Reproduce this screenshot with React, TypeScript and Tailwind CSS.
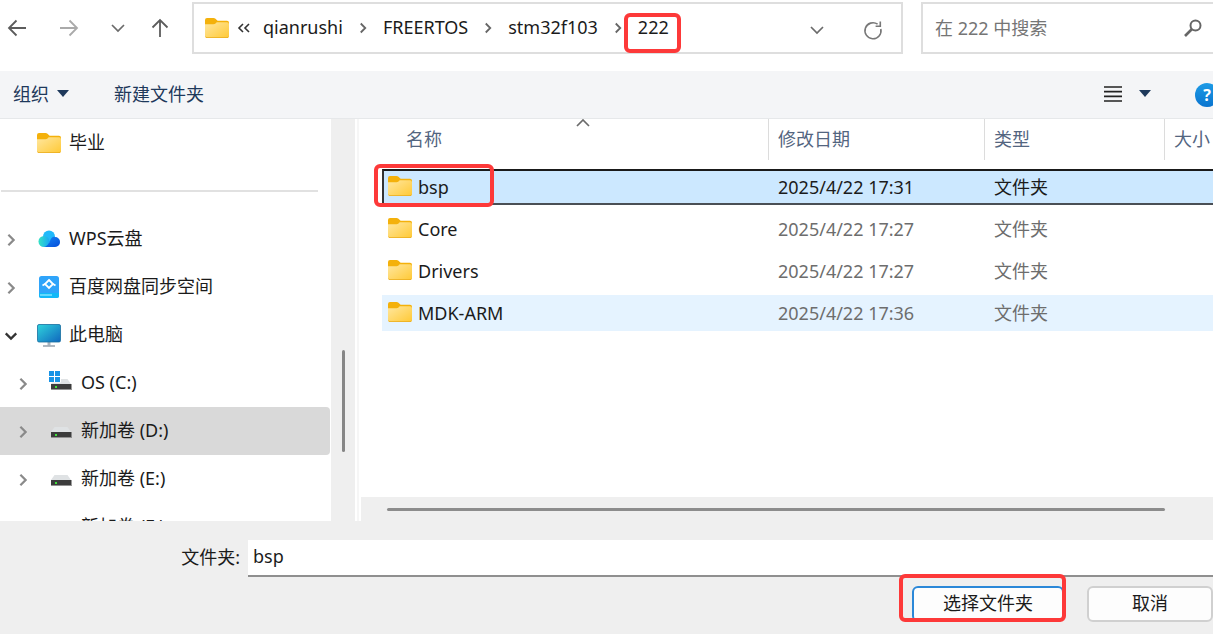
import { useState } from "react";
import type { ReactNode } from "react";
import clsx from "clsx";

type Entry = {
  name: string;
  modified: string;
  type: string;
};

type TreeNode = {
  label: string;
  icon: ReactNode;
  level: 0 | 1;
  state?: "collapsed" | "expanded";
};

const ENTRIES: Entry[] = [
  { name: "bsp", modified: "2025/4/22 17:31", type: "文件夹" },
  { name: "Core", modified: "2025/4/22 17:27", type: "文件夹" },
  { name: "Drivers", modified: "2025/4/22 17:27", type: "文件夹" },
  { name: "MDK-ARM", modified: "2025/4/22 17:36", type: "文件夹" },
];

const TREE: TreeNode[] = [
  { label: "WPS云盘", icon: <CloudIcon />, level: 0, state: "collapsed" },
  { label: "百度网盘同步空间", icon: <SyncIcon />, level: 0, state: "collapsed" },
  { label: "此电脑", icon: <ComputerIcon />, level: 0, state: "expanded" },
  { label: "OS (C:)", icon: <DriveIcon system />, level: 1, state: "collapsed" },
  { label: "新加卷 (D:)", icon: <DriveIcon />, level: 1, state: "collapsed" },
  { label: "新加卷 (E:)", icon: <DriveIcon />, level: 1, state: "collapsed" },
  { label: "新加卷 (F:)", icon: <DriveIcon />, level: 1, state: "collapsed" },
];

const PATH = ["qianrushi", "FREERTOS", "stm32f103", "222"];

export default function App() {
  const [folder, setFolder] = useState("bsp");

  return (
    <div className="flex h-screen flex-col overflow-hidden bg-white font-['Noto_Sans','Noto_Sans_CJK_SC',sans-serif] text-[18px] leading-6 text-[#1b1b1b]">
      <AddressBar />
      <Toolbar />
      <main className="flex min-h-0 flex-1">
        <Sidebar />
        <FileList selected={folder} onSelect={setFolder} />
      </main>
      <Footer folder={folder} onChange={setFolder} />
    </div>
  );
}

function AddressBar() {
  return (
    <header className="flex h-[71px] shrink-0 items-start pt-0.5">
      <div className="flex h-[52px] w-48 shrink-0 items-center justify-between pr-[22px] pl-[7px]">
        <button type="button" aria-label="后退">
          <ArrowIcon className="text-[#5c5c5c]" />
        </button>
        <button type="button" aria-label="前进" className="ml-2">
          <ArrowIcon className="rotate-180 text-[#aaa]" />
        </button>
        <button type="button" aria-label="最近浏览的位置" className="ml-2">
          <Chevron className="size-4 text-[#6b6b6b]" />
        </button>
        <button type="button" aria-label="上移">
          <ArrowIcon className="rotate-90 text-[#5c5c5c]" />
        </button>
      </div>
      <nav className="flex h-[52px] min-w-0 flex-1 items-center border-2 border-[#dedede] pl-[11px]">
        <FolderIcon />
        <svg viewBox="0 0 14 12" className="ml-2 h-3 w-3.5 fill-none stroke-[#333] stroke-[1.6]">
          <path d="M6 2 2 6l4 4M12 2 8 6l4 4" />
        </svg>
        <ol className="ml-3 flex items-center">
          {PATH.map((part, i) => {
            const last = i === PATH.length - 1;
            return (
              <li key={part} className="relative flex items-center">
                <button type="button" className="pb-0.5">
                  {part}
                </button>
                {!last && (
                  <Chevron strokeWidth={2.4} className="mx-3.5 size-3 -rotate-90 text-[#666]" />
                )}
                {last && <Marker className="-top-0.5 -right-3 -bottom-3 -left-3.5" />}
              </li>
            );
          })}
        </ol>
        <button type="button" aria-label="展开路径" className="ml-auto pt-1">
          <Chevron className="size-4 text-[#6b6b6b]" />
        </button>
        <button type="button" aria-label="刷新" className="mr-[18px] ml-[38px] pt-1">
          <svg viewBox="0 0 20 20" className="size-5 fill-none stroke-[#777] stroke-[1.6]">
            <path d="M17.800 9A8 8 0 1 1 14.600 4.200M17.300 1.500v4.700h-4.700" />
          </svg>
        </button>
      </nav>
      <label className="ml-[18px] flex h-[52px] w-[292px] shrink-0 items-center border-y-2 border-l-2 border-[#dedede] pr-2.5 pl-3">
        <input
          type="search"
          aria-label="搜索"
          placeholder="在 222 中搜索"
          className="min-w-0 flex-1 outline-none placeholder:text-[#757575]"
        />
        <svg viewBox="0 0 20 20" className="size-5 fill-none stroke-[#666] stroke-2">
          <circle cx="12.500" cy="7.500" r="5" />
          <path d="m9 11-7 7" strokeWidth="2.600" />
        </svg>
      </label>
    </header>
  );
}

function Toolbar() {
  return (
    <div className="flex h-12 shrink-0 items-center overflow-hidden border-b border-[#e6e8ea] bg-[#f4f5f7] pl-[13px] text-[#1e395b]">
      <button type="button" className="flex items-center gap-2 pb-0.5">
        组织
        <Triangle />
      </button>
      <button type="button" className="ml-[45px] pb-0.5">
        新建文件夹
      </button>
      <button type="button" aria-label="视图" className="ml-auto pb-0.5">
        <svg viewBox="0 0 20 20" className="size-5 fill-none stroke-[#222] stroke-[1.7]">
          <path d="M1 3h18M1 7.600h18M1 12.300h18M1 17h18" />
        </svg>
      </button>
      <button type="button" aria-label="更多选项" className="ml-4 pb-0.5">
        <Triangle />
      </button>
      <button
        type="button"
        aria-label="帮助"
        className="-mr-1.5 ml-11 size-6 rounded-full bg-linear-to-b from-[#1d9be6] to-[#0b74cf] text-base font-bold text-white"
      >
        ?
      </button>
    </div>
  );
}

function Sidebar() {
  return (
    <>
      <aside className="w-[331px] shrink-0 overflow-hidden">
        <TreeItem node={{ label: "毕业", icon: <FolderIcon />, level: 0 }} />
        <div className="flex h-12 items-center pr-[13px] pl-px">
          <hr className="w-full border-t-2 border-[#e1e1e1]" />
        </div>
        {TREE.map((node) => (
          <TreeItem key={node.label} node={node} active={node.label === "新加卷 (D:)"} />
        ))}
      </aside>
      <div className="flex w-6 shrink-0 flex-col items-center bg-[#efefef]">
        <div className="mt-auto mb-[69px] h-[102px] w-[3px] rounded-full bg-[#868686]" />
      </div>
      <div className="w-1.5 shrink-0 border-x-2 border-white bg-[#f6f6f6]" />
    </>
  );
}

function TreeItem({ node, active }: { node: TreeNode; active?: boolean }) {
  return (
    <button
      type="button"
      className={clsx(
        "flex h-12 w-[330px] items-center rounded-r-sm text-left",
        node.level === 1 && "pl-3",
        active && "bg-[#d9d9d9]",
      )}
    >
      <span className="flex w-[37px] pt-0.5 pl-1">
        {node.state && (
          <Chevron
            strokeWidth={2.6}
            className={clsx(
              "size-3.5",
              node.state === "expanded" ? "text-[#333]" : "-rotate-90 text-[#8a8a8a]",
            )}
          />
        )}
      </span>
      {node.icon}
      <span className="ml-2 pb-0.5">{node.label}</span>
    </button>
  );
}

function FileList({
  selected,
  onSelect,
}: {
  selected: string;
  onSelect: (name: string) => void;
}) {
  return (
    <section className="flex min-w-0 flex-1 flex-col">
      <div className="min-h-0 flex-1 overflow-hidden pl-[21px]">
        <table className="-mt-1.5 w-full table-fixed border-separate border-spacing-x-0 border-spacing-y-1.5">
          <thead>
            <tr className="text-left align-top text-[#53657f]">
              <th className="relative h-11 p-0 font-normal">
                <div className="h-[41px] pt-2 pl-6">名称</div>
                <Chevron className="absolute -top-1 left-1/2 size-4 rotate-180 text-[#6b6b6b]" />
              </th>
              <th className="w-[216px] p-0 font-normal">
                <HeadCell>修改日期</HeadCell>
              </th>
              <th className="w-[180px] p-0 font-normal">
                <HeadCell>类型</HeadCell>
              </th>
              <th className="w-[49px] p-0 font-normal whitespace-nowrap">
                <HeadCell>大小</HeadCell>
              </th>
            </tr>
          </thead>
          <tbody>
            {ENTRIES.map((entry) => {
              const active = entry.name === selected;
              const hovered = entry.name === "MDK-ARM";
              const cell = clsx(
                "h-9 p-0",
                active && "border-t-2 border-b-2 border-t-[#1a1a1a] border-b-[#4a4f55] bg-[#cce8ff]",
                hovered && !active && "bg-[#e5f3ff]",
              );
              const meta = clsx(cell, !active && "text-[#6d6d6d]");
              return (
                <tr key={entry.name} onClick={() => onSelect(entry.name)}>
                  <td className={clsx(cell, "relative", active ? "border-l-2 border-l-[#333] pl-1" : "pl-1.5")}>
                    <div className="flex items-center gap-1.5">
                      <span className="pb-0.5">
                        <FolderIcon />
                      </span>
                      {entry.name}
                    </div>
                    {active && <Marker className="-top-[7px] -bottom-1 -left-2.5 w-[120px]" />}
                  </td>
                  <td className={clsx(meta, "pl-2.5")}>{entry.modified}</td>
                  <td className={clsx(meta, "pl-2.5")}>{entry.type}</td>
                  <td className={meta} />
                </tr>
              );
            })}
          </tbody>
        </table>
      </div>
      <div className="flex h-6 shrink-0 items-center bg-[#efefef] pr-12 pl-[26px]">
        <div className="h-[3px] w-full rounded-full bg-[#8c8c8c]" />
      </div>
    </section>
  );
}

function HeadCell({ children }: { children: ReactNode }) {
  return <div className="h-[41px] border-l border-[#dcdcdc] pt-2 pl-[9px]">{children}</div>;
}

function Footer({ folder, onChange }: { folder: string; onChange: (value: string) => void }) {
  return (
    <footer className="shrink-0 bg-[#efefef] pt-[19px] pb-3">
      <div className="flex items-center">
        <label htmlFor="folder" className="w-[248px] shrink-0 pr-2 pb-1 text-right">
          文件夹:
        </label>
        <input
          id="folder"
          value={folder}
          onChange={(e) => onChange(e.target.value)}
          className="h-[37px] min-w-0 flex-1 border-b-2 border-[#8f8f8f] bg-white pb-1 pl-[5px] outline-none"
        />
      </div>
      <div className="mt-[9px] flex justify-end gap-[23px]">
        <div className="relative">
          <button
            type="button"
            className="h-9 w-[152px] rounded-md border-2 border-[#2b88d8] bg-[#fdfdfd] pb-0.5"
          >
            选择文件夹
          </button>
          <Marker className="-top-3 -right-0.5 bottom-0 -left-[13px]" />
        </div>
        <button
          type="button"
          className="h-9 w-[126px] rounded-md border-2 border-[#d0d0d0] bg-[#fdfdfd] pb-0.5"
        >
          取消
        </button>
      </div>
    </footer>
  );
}

// red highlight frame drawn over an element
function Marker({ className }: { className: string }) {
  return (
    <span
      className={clsx(
        "pointer-events-none absolute rounded-md border-4 border-[#fd3939]",
        className,
      )}
    />
  );
}

function Chevron({ className, strokeWidth = 1.7 }: { className?: string; strokeWidth?: number }) {
  return (
    <svg
      viewBox="0 0 16 16"
      className={clsx("shrink-0 fill-none stroke-current", className)}
      strokeWidth={strokeWidth}
    >
      <path d="m2 5 6 6 6-6" />
    </svg>
  );
}

function ArrowIcon({ className }: { className: string }) {
  return (
    <svg viewBox="0 0 20 20" className={clsx("size-5 fill-none stroke-current stroke-[1.8]", className)}>
      <path d="M19 10H2M9.500 2.500 2 10l7.500 7.500" />
    </svg>
  );
}

function Triangle() {
  return (
    <svg viewBox="0 0 12 7" className="h-[7px] w-3 fill-[#1e395b]">
      <path d="M0 0h12L6 7z" />
    </svg>
  );
}

function FolderIcon() {
  return (
    <svg viewBox="0 0 24 20" className="h-5 w-6 shrink-0">
      <defs>
        <linearGradient id="folder-front" x1="0" y1="0" x2="1" y2="1">
          <stop offset="0" stopColor="#ffe7a0" />
          <stop offset="1" stopColor="#ffc935" />
        </linearGradient>
      </defs>
      <path d="M0 2Q0 0 2 0h6.500q1.200 0 2 .8L12.600 2.800H22q2 0 2 2V12H0z" fill="#f4b10b" />
      <path d="M0 6.200h8.500q1.200 0 2-.8l1.200-1.200H22q2 0 2 2V18q0 2-2 2H2q-2 0-2-2z" fill="url(#folder-front)" />
      <path d="M.3 18.500q.4 1.100 1.700 1.100h20q1.300 0 1.700-1.100" fill="none" stroke="#e9aa1c" strokeWidth=".8" />
    </svg>
  );
}

function CloudIcon() {
  return (
    <svg viewBox="0 0 24 24" className="size-6 shrink-0">
      <defs>
        <linearGradient id="cloud-left" x1="0" y1="0" x2="1" y2="0">
          <stop offset="0" stopColor="#35e2c4" />
          <stop offset="1" stopColor="#18a8f5" />
        </linearGradient>
        <linearGradient id="cloud-right" x1="0" y1="0" x2="1" y2="1">
          <stop offset="0" stopColor="#1b9bff" />
          <stop offset="1" stopColor="#0548d6" />
        </linearGradient>
      </defs>
      <circle cx="12" cy="9.500" r="6" fill="#20b9fa" />
      <circle cx="7" cy="14.500" r="5.500" fill="url(#cloud-left)" />
      <path d="M7 20q4-1 6-6t5-4a5 5 0 0 1 0 10z" fill="url(#cloud-right)" />
      <path d="M7 20q4-1 6-6t5-4a5 5 0 0 1 0 10z" fill="#0a58e0" opacity=".3" />
    </svg>
  );
}

function SyncIcon() {
  return (
    <svg viewBox="0 0 24 24" className="size-6 shrink-0">
      <rect x="2" y="1" width="20" height="22" rx="2.500" fill="#2fa4fa" />
      <path d="M2 18h20v2.500q0 2.500-2.500 2.500h-15Q2 23 2 20.500z" fill="#12b9f8" />
      <path d="M3 20h12" stroke="#7fe6ff" strokeWidth="1.500" />
      <path d="m12 5 4 4-4 4-4-4z" fill="none" stroke="#fff" strokeWidth="1.800" />
      <path d="M5.500 10.500 8 9M18.500 10.500 16 9" stroke="#fff" strokeWidth="1.800" />
    </svg>
  );
}

function ComputerIcon() {
  return (
    <svg viewBox="0 0 24 24" className="size-6 shrink-0">
      <defs>
        <linearGradient id="screen" x1="0" y1="0" x2="1" y2="1">
          <stop offset="0" stopColor="#2fd3dc" />
          <stop offset="1" stopColor="#1067be" />
        </linearGradient>
      </defs>
      <path d="M10.500 19h3v3.500h-3z" fill="#a9b4bf" />
      <path d="M6 23h12" stroke="#8f9ba8" strokeWidth="1.400" />
      <rect x=".5" y="1.500" width="23" height="17.500" rx="1.500" fill="url(#screen)" stroke="#176f9f" strokeWidth=".8" />
    </svg>
  );
}

function DriveIcon({ system }: { system?: boolean }) {
  return (
    <svg viewBox="0 0 24 24" className="size-6 shrink-0">
      <path d="M5.500 8h13l3.500 5H2z" fill="#dfe2e4" />
      <rect x="2" y="13" width="20.500" height="6" fill="#3c3c3c" />
      <path d="M2 18.500h20.500" stroke="#929292" />
      <path d="M6 15h2v2H6z" fill="#3fe03a" />
      {system && (
        <>
          <path d="M0 0h12v11.500H0z" fill="#fff" />
          <path d="M0 0h5v5H0zM6 0h5v5H6zM0 6h5v5H0zM6 6h5v5H6z" fill="#1793e6" />
        </>
      )}
    </svg>
  );
}
